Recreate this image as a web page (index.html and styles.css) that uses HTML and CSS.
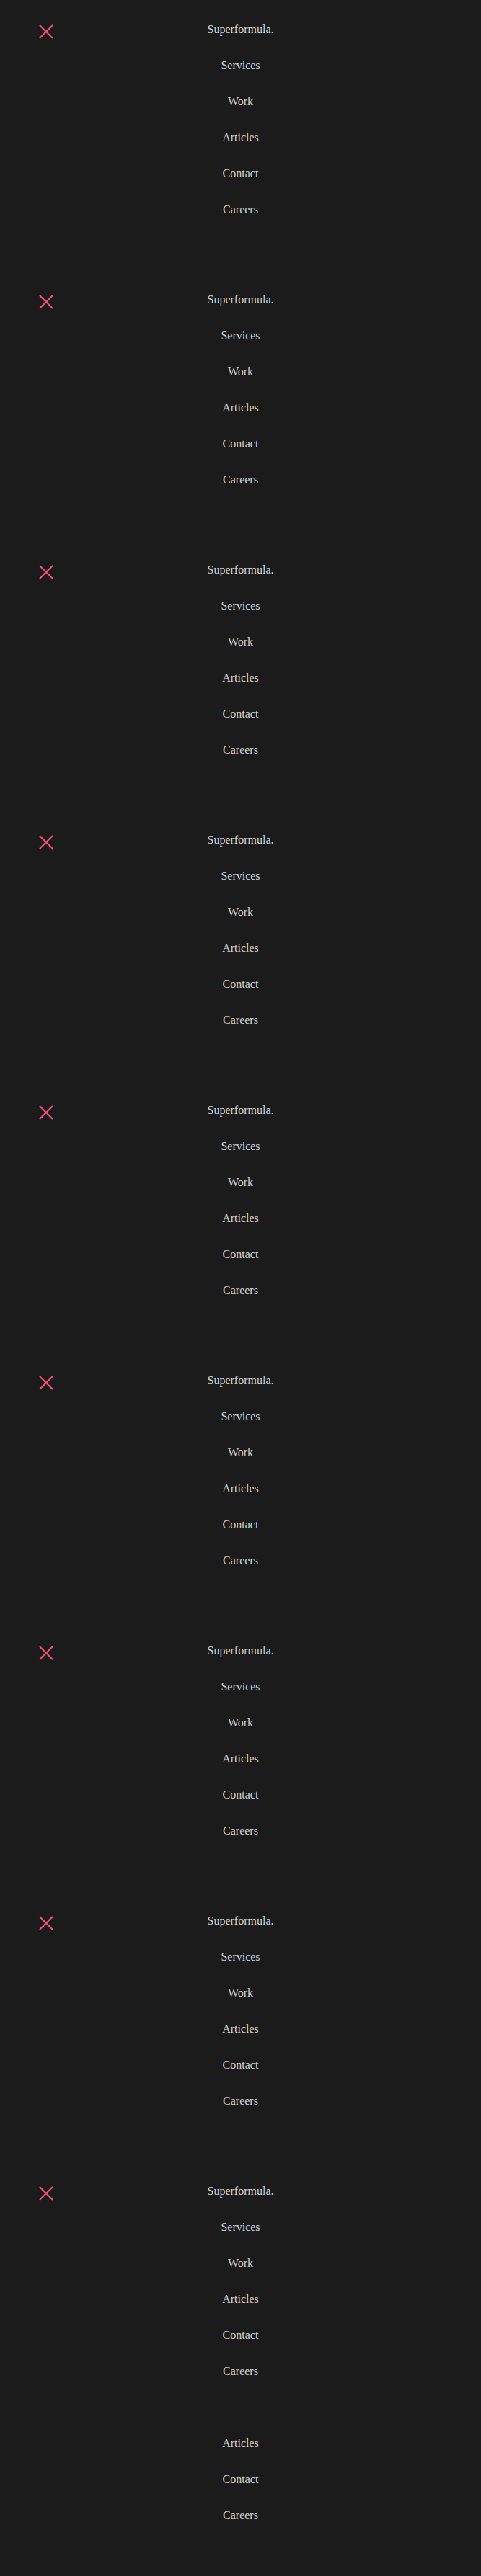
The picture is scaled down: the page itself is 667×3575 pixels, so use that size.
FILE: index.html
```html
<!DOCTYPE html>
<html lang="en">
<head>
<meta charset="utf-8">
<title>Superformula menu</title>
<link rel="stylesheet" href="styles.css">
</head>
<body>
<main class="page">
  <nav class="menu">
    <div class="menu-head">
      <button class="close" aria-label="Close"><svg viewBox="0 0 20 20" width="20" height="20"><path d="M1 1L19 19M19 1L1 19"/></svg></button>
      <span class="item logo">Superformula.</span>
      <span></span>
    </div>
    <a class="item">Services</a><a class="item">Work</a><a class="item">Articles</a><a class="item">Contact</a><a class="item">Careers</a>
  </nav>
  <nav class="menu">
    <div class="menu-head">
      <button class="close" aria-label="Close"><svg viewBox="0 0 20 20" width="20" height="20"><path d="M1 1L19 19M19 1L1 19"/></svg></button>
      <span class="item logo">Superformula.</span>
      <span></span>
    </div>
    <a class="item">Services</a><a class="item">Work</a><a class="item">Articles</a><a class="item">Contact</a><a class="item">Careers</a>
  </nav>
  <nav class="menu">
    <div class="menu-head">
      <button class="close" aria-label="Close"><svg viewBox="0 0 20 20" width="20" height="20"><path d="M1 1L19 19M19 1L1 19"/></svg></button>
      <span class="item logo">Superformula.</span>
      <span></span>
    </div>
    <a class="item">Services</a><a class="item">Work</a><a class="item">Articles</a><a class="item">Contact</a><a class="item">Careers</a>
  </nav>
  <nav class="menu">
    <div class="menu-head">
      <button class="close" aria-label="Close"><svg viewBox="0 0 20 20" width="20" height="20"><path d="M1 1L19 19M19 1L1 19"/></svg></button>
      <span class="item logo">Superformula.</span>
      <span></span>
    </div>
    <a class="item">Services</a><a class="item">Work</a><a class="item">Articles</a><a class="item">Contact</a><a class="item">Careers</a>
  </nav>
  <nav class="menu">
    <div class="menu-head">
      <button class="close" aria-label="Close"><svg viewBox="0 0 20 20" width="20" height="20"><path d="M1 1L19 19M19 1L1 19"/></svg></button>
      <span class="item logo">Superformula.</span>
      <span></span>
    </div>
    <a class="item">Services</a><a class="item">Work</a><a class="item">Articles</a><a class="item">Contact</a><a class="item">Careers</a>
  </nav>
  <nav class="menu">
    <div class="menu-head">
      <button class="close" aria-label="Close"><svg viewBox="0 0 20 20" width="20" height="20"><path d="M1 1L19 19M19 1L1 19"/></svg></button>
      <span class="item logo">Superformula.</span>
      <span></span>
    </div>
    <a class="item">Services</a><a class="item">Work</a><a class="item">Articles</a><a class="item">Contact</a><a class="item">Careers</a>
  </nav>
  <nav class="menu">
    <div class="menu-head">
      <button class="close" aria-label="Close"><svg viewBox="0 0 20 20" width="20" height="20"><path d="M1 1L19 19M19 1L1 19"/></svg></button>
      <span class="item logo">Superformula.</span>
      <span></span>
    </div>
    <a class="item">Services</a><a class="item">Work</a><a class="item">Articles</a><a class="item">Contact</a><a class="item">Careers</a>
  </nav>
  <nav class="menu">
    <div class="menu-head">
      <button class="close" aria-label="Close"><svg viewBox="0 0 20 20" width="20" height="20"><path d="M1 1L19 19M19 1L1 19"/></svg></button>
      <span class="item logo">Superformula.</span>
      <span></span>
    </div>
    <a class="item">Services</a><a class="item">Work</a><a class="item">Articles</a><a class="item">Contact</a><a class="item">Careers</a>
  </nav>
  <nav class="menu">
    <div class="menu-head">
      <button class="close" aria-label="Close"><svg viewBox="0 0 20 20" width="20" height="20"><path d="M1 1L19 19M19 1L1 19"/></svg></button>
      <span class="item logo">Superformula.</span>
      <span></span>
    </div>
    <a class="item">Services</a><a class="item">Work</a><a class="item">Articles</a><a class="item">Contact</a><a class="item">Careers</a>
  </nav>
  <nav class="menu menu-tail">
    <a class="item">Articles</a><a class="item">Contact</a><a class="item">Careers</a>
  </nav>
</main>
</body>
</html>
```
FILE: styles.css
```css
html, body {
  margin: 0;
  padding: 0;
  background: #1b1b1b;
}

body {
  font-family: "Liberation Serif", "Times New Roman", serif;
  font-size: 16px;
  color: #d2d2d2;
}

.page {
  display: flex;
  flex-direction: column;
}

.menu {
  box-sizing: border-box;
  height: 375px;
  padding-top: 32px;
  display: flex;
  flex-direction: column;
  align-items: center;
  gap: 32px;
}

.menu-tail {
  height: 200px;
  padding-top: 7px;
}

.menu-head {
  align-self: stretch;
  display: grid;
  grid-template-columns: 1fr auto 1fr;
  grid-template-rows: 18px;
  height: 18px;
  align-items: start;
}

.item {
  display: block;
  line-height: 18px;
  height: 18px;
  color: #d2d2d2;
  text-decoration: none;
  white-space: nowrap;
}

.close {
  justify-self: start;
  margin: 2px 0 0 54px;
  padding: 0;
  width: 20px;
  height: 20px;
  border: 0;
  background: none;
  display: block;
}

.close svg {
  display: block;
  stroke: #ff4f78;
  stroke-width: 2;
  fill: none;
}
```
